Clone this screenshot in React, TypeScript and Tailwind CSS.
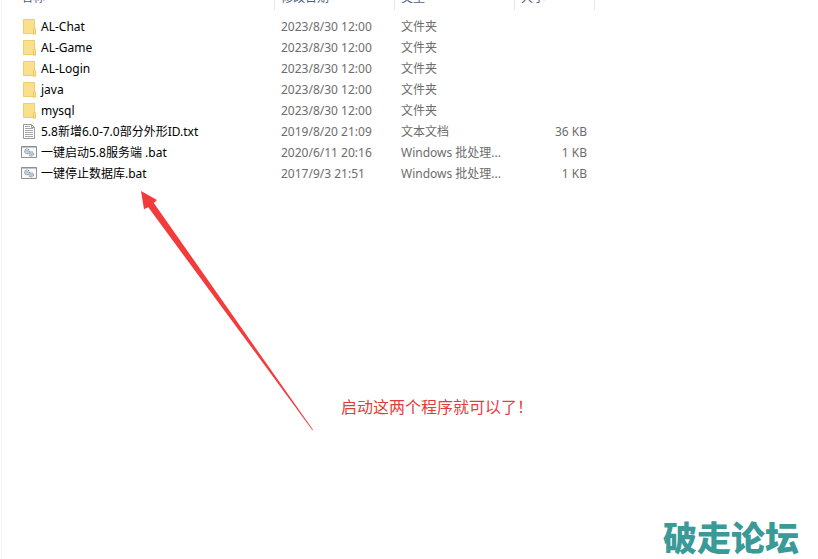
import React from 'react';

type FileKind = 'folder' | 'text' | 'batch';

interface FileItem {
    name: string;
    date: string;
    type: string;
    size: string;
    kind: FileKind;
}

const files: FileItem[] = [
    { name: 'AL-Chat', date: '2023/8/30 12:00', type: '文件夹', size: '', kind: 'folder' },
    { name: 'AL-Game', date: '2023/8/30 12:00', type: '文件夹', size: '', kind: 'folder' },
    { name: 'AL-Login', date: '2023/8/30 12:00', type: '文件夹', size: '', kind: 'folder' },
    { name: 'java', date: '2023/8/30 12:00', type: '文件夹', size: '', kind: 'folder' },
    { name: 'mysql', date: '2023/8/30 12:00', type: '文件夹', size: '', kind: 'folder' },
    { name: '5.8新增6.0-7.0部分外形ID.txt', date: '2019/8/20 21:09', type: '文本文档', size: '36 KB', kind: 'text' },
    { name: '一键启动5.8服务端 .bat', date: '2020/6/11 20:16', type: 'Windows 批处理...', size: '1 KB', kind: 'batch' },
    { name: '一键停止数据库.bat', date: '2017/9/3 21:51', type: 'Windows 批处理...', size: '1 KB', kind: 'batch' },
];

const FolderIcon = () => (
    <svg width="16" height="16" viewBox="0 0 16 16" className="shrink-0">
        <path d="M2 0h12v15H2z" fill="#fbe08c" />
        <path d="M2.5 0.5h11v14h-11z" fill="none" stroke="#ecce74" />
        <path d="M12.5 15.2v-5l1-1.5 1 1.5v5z" fill="#fbe7a0" stroke="#e5bd50" strokeWidth="0.8" />
    </svg>
);

const TextIcon = () => (
    <svg width="16" height="16" viewBox="0 0 16 16" className="shrink-0">
        <path d="M2.5 0.5h8l3 3v11h-11z" fill="#fff" stroke="#999" />
        <path d="M10.5 0.5v3h3" fill="none" stroke="#999" />
        <path d="M4 2.5h5M4 4.5h8M4 6.5h8M4 8.5h8M4 10.5h8M4 12.5h8" stroke="#a6a6a6" />
    </svg>
);

const BatchIcon = () => (
    <svg width="16" height="16" viewBox="0 0 16 16" className="shrink-0">
        <path d="M0.5 1.5h15v11H0.5z" fill="#f8fafb" stroke="#8c9094" />
        <path d="M0.5 2h15" stroke="#8c9094" />
        <circle cx="6" cy="6.3" r="2.3" fill="#e6ecf1" stroke="#8795a3" strokeWidth="1.1" strokeDasharray="1.3 0.5" />
        <circle cx="6" cy="6.3" r="0.9" fill="#fff" stroke="#8795a3" strokeWidth="0.6" />
        <circle cx="10.3" cy="8.8" r="2.1" fill="#e6ecf1" stroke="#8795a3" strokeWidth="1.1" strokeDasharray="1.3 0.5" />
        <circle cx="10.3" cy="8.8" r="0.8" fill="#fff" stroke="#8795a3" strokeWidth="0.6" />
    </svg>
);

const icons = { folder: FolderIcon, text: TextIcon, batch: BatchIcon };

const App: React.FC = () => {
    return (
        <div className="relative min-h-screen overflow-hidden bg-white pl-px font-['Noto_Sans','Noto_Sans_CJK_SC',sans-serif] text-xs text-[#6d6d6d]">
            <main className="flow-root min-h-screen border-l border-[#f3f3f3]">
                {/* list is scrolled, so the header is half out of view */}
                <table className="-mt-[14px] w-[593px] table-fixed border-separate border-spacing-0">
                    <thead>
                        <tr className="h-6 text-left text-[#4c607a] *:border-r *:border-[#e5e5e5] *:font-normal">
                            <th className="w-[273px] pl-[19px]">名称</th>
                            <th className="w-[120px] pl-1.5">修改日期</th>
                            <th className="w-[120px] pl-1.5">类型</th>
                            <th className="w-20 pl-1.5">大小</th>
                        </tr>
                    </thead>
                    <tbody className="before:block before:h-1.5">
                        {files.map(f => {
                            const Icon = icons[f.kind];
                            return (
                                <tr key={f.name} className="h-[21px] whitespace-nowrap leading-5">
                                    <td className="pl-[19px] text-black">
                                        <div className="flex items-center gap-1">
                                            <Icon />
                                            <span>{f.name}</span>
                                        </div>
                                    </td>
                                    <td className="pl-1.5">{f.date}</td>
                                    <td className="pl-1.5">{f.type}</td>
                                    <td className="pr-2 text-right">{f.size}</td>
                                </tr>
                            );
                        })}
                    </tbody>
                </table>
            </main>

            <svg width="174" height="241" viewBox="0 0 174 241" className="absolute left-[140px] top-[190px]">
                <path d="M1 1L17 10L13.8 13L173 239.8L172.4 240.2L8.3 17.3L4 19.2z" fill="#f43b3b" />
            </svg>
            <p className="absolute left-[341px] top-[394px] whitespace-nowrap font-['Noto_Sans_CJK_SC',sans-serif] text-base text-[#e23d3d]">启动这两个程序就可以了！</p>
            <p className="absolute bottom-1 right-[19px] whitespace-nowrap font-['Noto_Sans_CJK_SC',sans-serif] text-[34px] font-black leading-9 text-[#399a98]">破走论坛</p>
        </div>
    );
};

export default App;
